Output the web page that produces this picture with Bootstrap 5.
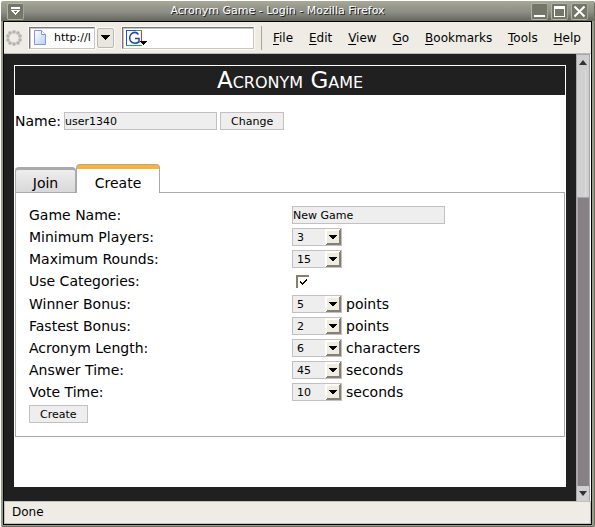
<!DOCTYPE html>
<html lang="en">
<head>
<meta charset="utf-8">
<meta name="viewport" content="width=device-width, initial-scale=1">
<title>Acronym Game - Login</title>
<link href="https://cdn.jsdelivr.net/npm/bootstrap@5.3.0/dist/css/bootstrap.min.css" rel="stylesheet">
<style>
  body { font-family: "DejaVu Sans", sans-serif; font-size: 11px; line-height: 16px; color: #000; background: #fff; }
  button, input, select { font-size: 11px; line-height: 16px; color: #000; }
  svg { display: block; }

  /* Window frame */
  .win { padding: 1px 0 3px 1px; }
  .frame { background: #989a88; border: solid #6c6e60; border-width: 0 1px 1px 0; border-radius: 3px 3px 2px 2px; padding: 0 2px 1px 2px; }
  .titlebar { height: 20px; gap: 3px; padding: 0 6px 0 6px; background: linear-gradient(#a9a99a, #9a9b8c 25%, #8d8e86 55%, #72746a 85%, #66685d); margin: 0 -2px; border-radius: 3px 3px 0 0; }
  .win-title { color: #fff; text-shadow: 1px 1px 0 #222; }
  .win-btn { width: 17px; height: 17px; padding: 0; border: 1px solid; border-color: #b2b4a2 #a2a494 #b2b4a2 #b2b4a2; border-radius: 2px; background: #74766a; }
  .inner { border: 1px solid #000; background: #efece6; }

  /* Toolbar */
  .toolbar { height: 32px; padding-left: 2px; border-bottom: 1px solid #bdb7bd; }
  .toolbar-field { height: 22px; border: 1px solid; border-color: #77757a #c9c6c2 #c9c6c2 #77757a; box-shadow: inset 1px 1px 0 #c5c5c8, 0 0 0 1px #fbfaf7; background: #fff; }
  .url-box { width: 66px; margin-left: 6px; padding-left: 4px; }
  .url-box input { width: 39px; margin-left: 8px; }
  .search-box { width: 132px; margin-left: 8px; padding-left: 3px; }
  .plain-field { border: 0; padding: 0; background: transparent; outline: 0; min-width: 0; }
  .drop { width: 17px; height: 20px; padding: 0; margin-left: 2px; border: 1px solid #bcb8b4; border-radius: 2px; background: #e9e6df; box-shadow: 0 0 0 1px #fbfaf7; }
  .menu { margin-left: 7px; padding: 0 10px 0 11px; height: 24px; border-left: 1px solid #aaa78d; font-size: 12px; }
  .menu a { color: #000; text-decoration: none; }
  .menu u { text-underline-offset: 2px; }

  /* Page */
  .view { background: #fff; }
  .page { background: #202020; padding: 11px 10px 14px; }
  .sheet { background: #fff; padding: 1px; }
  .banner { background: #202020; color: #fff; font-size: 23px; line-height: 29px; font-variant: small-caps; font-weight: 400; }
  .copy { font-size: 14px; line-height: 18px; }
  .name-row { margin-top: 17px; gap: 3px; }
  .box-field { height: 18px; width: 153px; padding: 0; border: 1px solid #c3bfc3; border-radius: 0; background: #eee; }
  .box-btn { height: 18px; padding: 1px 10px 0; line-height: 15px; border: 1px solid #c3bfc3; background: #eee; }
  .box-select { width: 50px; height: 18px; padding: 1px 0 0 4px; line-height: 15px; border: 1px solid #c3bfc3; border-radius: 0; appearance: none;
    background: #eee url("data:image/svg+xml,%3Csvg xmlns='http://www.w3.org/2000/svg' width='16' height='16' shape-rendering='crispEdges'%3E%3Cpath fill='%23fffdf5' d='M0 0h16v16H0z'/%3E%3Cpath fill='%23efece4' d='M2 2h12v12H2z'/%3E%3Cpath fill='%23868070' d='M15 0h1v16H1v-1h1v-1h12V1h1z'/%3E%3Cpath d='M4 6h8v1H4zM5 7h6v1H5zM6 8h4v1H6zM7 9h2v1H7z'/%3E%3C/svg%3E") no-repeat right center; }
  .tick { width: 13px; height: 13px; margin: 3px 4px; appearance: none; border: solid #86806f; border-width: 2px 0 0 2px; background: #fffdf8; }
  .tick:checked { background: #fffdf8 url("data:image/svg+xml,%3Csvg xmlns='http://www.w3.org/2000/svg' width='11' height='11' shape-rendering='crispEdges'%3E%3Cpath d='M2 4h1v1h1v1h1V5h1V4h1V3h1V2h1v2H8v1H7v1H6v1H5v1H4V7H3V6H2z'/%3E%3C/svg%3E") no-repeat; }

  /* Tabs */
  .tabs { margin-top: 34px; }
  .tab-btn { border: 1px solid #aaa; border-bottom: 0; border-radius: 4px 4px 0 0; padding: 0; text-align: center; }
  .tab-join { width: 61px; height: 25px; padding-top: 3px; border-top-width: 3px; background: linear-gradient(#eee, #d8d8d8); }
  .tab-create { width: 84px; height: 29px; padding-top: 8px; background: linear-gradient(#ffb12e 4px, #fff 4px); margin-bottom: -1px; z-index: 1; }
  .panel { border: 1px solid #aaa; padding: 13px 9px 13px 13px; }
  .field-row { height: 22px; }
  .check-row { height: 23px; }
  .sheet-foot { min-height: 49px; }

  /* Scrollbar */
  .scroll { width: 14px; margin-right: 1px; background: #a9a5aa; padding: 1px 1px 0 1px; }
  .scroll-track { flex: 127 1 0; background: linear-gradient(90deg, #d0d0d0 70%, #dcdcd8 70%, #cdcdcd 85%); }
  .scroll-thumb { flex: 288 1 0; background: #878185; border: solid #a9a5aa; border-width: 1px 0 0 1px; }
  .scroll-end { height: 15px; padding: 0; border: 0; background: #cfcfcf; }
  .status { height: 23px; padding: 2px 7px; border: 1px solid #c2c1bd; font-size: 12px; }
</style>
</head>
<body>
<div class="win vh-100 d-flex flex-column">
  <div class="frame flex-grow-1 d-flex flex-column">
    <header class="titlebar d-flex align-items-center">
      <button class="win-btn" type="button" aria-label="Window menu"><svg width="15" height="15" shape-rendering="crispEdges"><path fill="#fff" d="M3 3h9v2H3zM3 6h9v1h-1v1h-1v1H9v1H8v1H7v-1H6V9H5V8H4V7H3z"/><path fill="#74766a" d="M6 7h3v1H8v1H7V8H6z"/></svg></button>
      <div class="win-title flex-grow-1 text-center text-nowrap">Acronym Game - Login - Mozilla Firefox</div>
      <button class="win-btn" type="button" aria-label="Minimize"><svg width="15" height="15"><path fill="#fff" d="M2 11h11v2H2z"/></svg></button>
      <button class="win-btn" type="button" aria-label="Maximize"><svg width="15" height="15"><path fill="#fff" fill-rule="evenodd" d="M2 2h11v11H2zM3 5v7h9V5z"/></svg></button>
      <button class="win-btn" type="button" aria-label="Close"><svg width="15" height="15"><path stroke="#fff" stroke-width="2" d="M2.500 2.500l10 10M12.500 2.500l-10 10"/></svg></button>
    </header>
    <div class="inner flex-grow-1 d-flex flex-column">
      <nav class="toolbar d-flex align-items-center">
        <svg width="17" height="18" class="flex-shrink-0" fill="#b5b4b1" stroke="#efece6" stroke-width=".3"><circle cx="8" cy="3" r="2"/><circle cx="12" cy="4" r="2"/><circle cx="14" cy="7" r="2"/><circle cx="14" cy="11" r="2"/><circle cx="12" cy="14" r="2"/><circle cx="8" cy="15" r="2"/><circle cx="4" cy="14" r="2"/><circle cx="2" cy="11" r="2"/><circle cx="2" cy="7" r="2"/><circle cx="4" cy="4" r="2"/></svg>
        <div class="toolbar-field url-box d-flex align-items-center">
          <svg width="12" height="15" class="flex-shrink-0"><defs><linearGradient id="pg" x2="1" y2="1"><stop stop-color="#fff"/><stop offset="1" stop-color="#b9d0f3"/></linearGradient></defs><path d="M.5.5h7l4 4v10H.5z" fill="url(#pg)" stroke="#8299cf"/><path d="M7.500.5v4h4" fill="#fff" stroke="#8299cf"/></svg>
          <input class="plain-field" type="text" value="http://l" aria-label="Address">
        </div>
        <button class="drop d-flex align-items-center justify-content-center" type="button" aria-label="Show history"><svg width="9" height="5" shape-rendering="crispEdges"><path d="M0 0h9v1H8v1H7v1H6v1H5v1H4V4H3V3H2V2H1V1H0z"/></svg></button>
        <div class="toolbar-field search-box d-flex align-items-center">
          <svg width="21" height="16" class="flex-shrink-0"><path fill="#fff" d="M0 0h16v16H0z"/><path d="M0 0h10v1H1v15H0z" fill="#1d55d8"/><path d="M10 0h6v1h-6zM0 15h16v1H0z" fill="#2aa83c"/><path d="M15 1h1v10h-1z" fill="#e0301e"/><path d="M12.500 4.500C11 2.500 8.500 2 6.500 3 3.500 4.500 3 8.500 4.500 11c2 3 6 2.500 8.500 1V8.500H9" fill="none" stroke="#2347b5" stroke-width="1.500"/><path d="M14 11h7v1h-1v1h-1v1h-1v1h-1v-1h-1v-1h-1v-1h-1z"/></svg>
          <input class="plain-field flex-grow-1" type="text" aria-label="Search">
        </div>
        <div class="menu flex-grow-1 d-flex align-items-center justify-content-between">
          <a href="#"><u>F</u>ile</a><a href="#"><u>E</u>dit</a><a href="#"><u>V</u>iew</a><a href="#"><u>G</u>o</a><a href="#"><u>B</u>ookmarks</a><a href="#"><u>T</u>ools</a><a href="#"><u>H</u>elp</a>
        </div>
      </nav>
      <div class="view flex-grow-1 d-flex">
        <main class="page flex-grow-1 d-flex flex-column">
          <div class="sheet flex-grow-1">
            <h1 class="banner text-center m-0">Acronym Game</h1>
            <form class="name-row d-flex align-items-center">
              <label class="copy" for="user">Name:</label>
              <input class="box-field" id="user" type="text" value="user1340">
              <button class="box-btn" type="button">Change</button>
            </form>
            <div class="tabs d-flex align-items-end" role="tablist">
              <button class="tab-btn tab-join copy" type="button" role="tab" aria-selected="false">Join</button>
              <button class="tab-btn tab-create copy" type="button" role="tab" aria-selected="true">Create</button>
            </div>
            <form class="panel copy">
              <div class="row gx-0 field-row"><label class="col-6" for="gname">Game Name:</label><div class="col-6 d-flex"><input class="box-field" id="gname" type="text" value="New Game"></div></div>
              <div class="row gx-0 field-row"><label class="col-6" for="minp">Minimum Players:</label><div class="col-6 d-flex"><select class="box-select" id="minp"><option>3</option></select></div></div>
              <div class="row gx-0 field-row"><label class="col-6" for="maxr">Maximum Rounds:</label><div class="col-6 d-flex"><select class="box-select" id="maxr"><option>15</option></select></div></div>
              <div class="row gx-0 check-row"><label class="col-6" for="cats">Use Categories:</label><div class="col-6 d-flex"><input class="tick" id="cats" type="checkbox" checked></div></div>
              <div class="row gx-0 field-row"><label class="col-6" for="winb">Winner Bonus:</label><div class="col-6 d-flex gap-1"><select class="box-select" id="winb"><option>5</option></select>points</div></div>
              <div class="row gx-0 field-row"><label class="col-6" for="fastb">Fastest Bonus:</label><div class="col-6 d-flex gap-1"><select class="box-select" id="fastb"><option>2</option></select>points</div></div>
              <div class="row gx-0 field-row"><label class="col-6" for="alen">Acronym Length:</label><div class="col-6 d-flex gap-1"><select class="box-select" id="alen"><option>6</option></select>characters</div></div>
              <div class="row gx-0 field-row"><label class="col-6" for="anst">Answer Time:</label><div class="col-6 d-flex gap-1"><select class="box-select" id="anst"><option>45</option></select>seconds</div></div>
              <div class="row gx-0 field-row"><label class="col-6" for="vott">Vote Time:</label><div class="col-6 d-flex gap-1"><select class="box-select" id="vott"><option>10</option></select>seconds</div></div>
              <button class="box-btn d-block" type="button">Create</button>
            </form>
            <div class="sheet-foot"></div>
          </div>
        </main>
        <div class="scroll d-flex flex-column">
          <button class="scroll-end d-flex align-items-center justify-content-center" type="button" aria-label="Scroll up"><svg width="8" height="5"><path fill="#333" d="M4 0l4 5H0z"/></svg></button>
          <div class="scroll-track"></div>
          <div class="scroll-thumb"></div>
          <button class="scroll-end d-flex align-items-center justify-content-center" type="button" aria-label="Scroll down"><svg width="8" height="5"><path fill="#333" d="M0 0h8L4 5z"/></svg></button>
        </div>
      </div>
      <footer class="status">Done</footer>
    </div>
  </div>
</div>
<script src="https://cdn.jsdelivr.net/npm/bootstrap@5.3.0/dist/js/bootstrap.bundle.min.js"></script>
</body>
</html>
